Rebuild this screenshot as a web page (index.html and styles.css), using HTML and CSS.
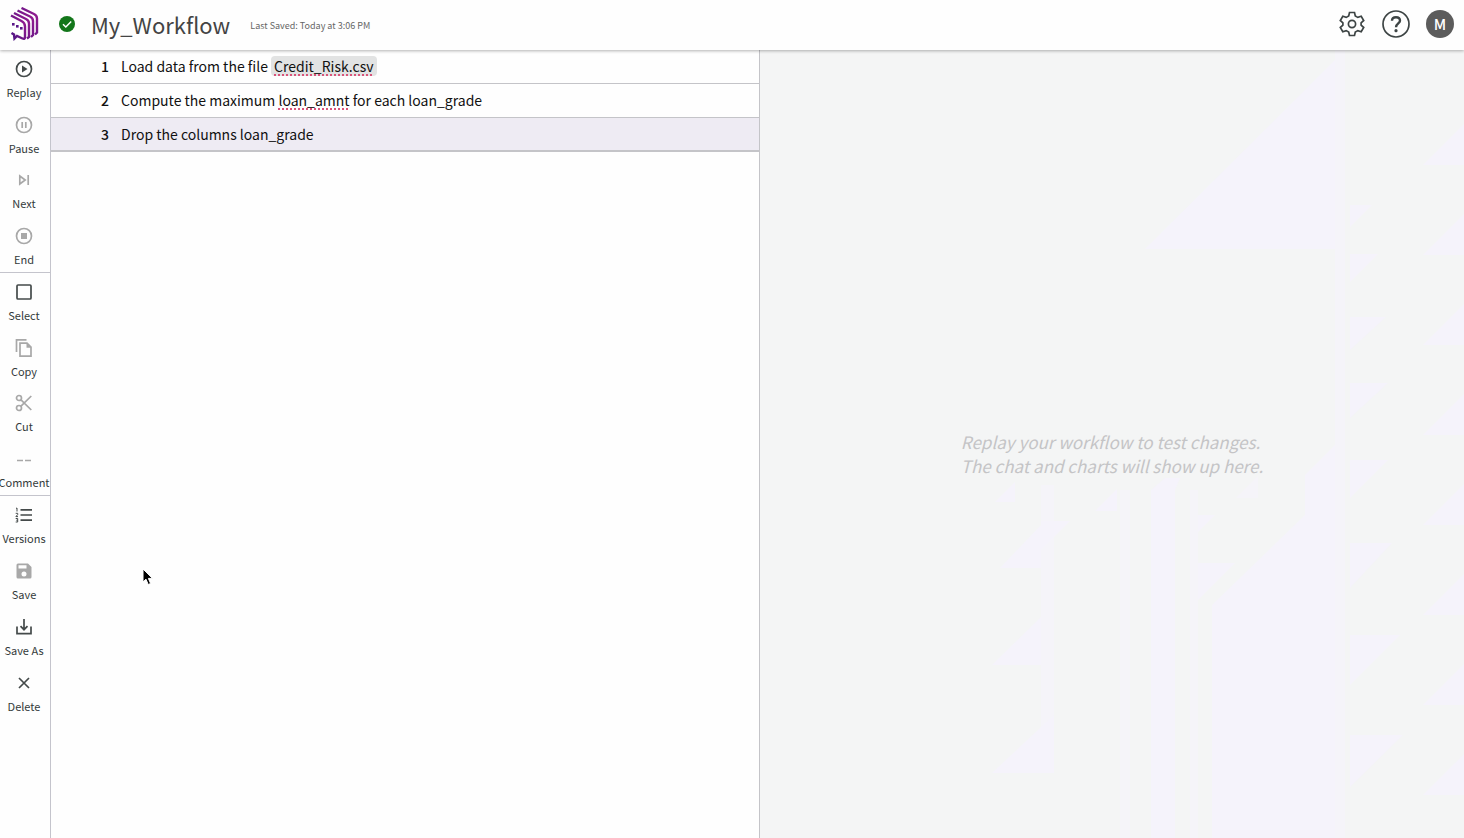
FILE: index.html
```html
<!DOCTYPE html>
<html lang="en">
<head>
<meta charset="utf-8">
<title>My_Workflow</title>
<link rel="stylesheet" href="styles.css">
</head>
<body>
<header class="topbar">
  <svg class="logo" viewBox="0 0 32 34" aria-label="Home" role="img">
    <defs><linearGradient id="brand" x1="0" y1="1" x2="1" y2="0"><stop offset="0" stop-color="#4b1583"/><stop offset="1" stop-color="#9c1c91"/></linearGradient></defs>
    <g fill="none" stroke="url(#brand)" stroke-width="2.4">
      <path d="M12.500 1L25 7Q28 8.500 28 11.500V25.500L26 27.500"/>
      <path d="M8.500 3.500L21 9.500Q24 11 24 14V28L22 30"/>
      <path d="M5 6L17 12Q20 13.500 20 16.500V30L18 31.500"/>
      <path d="M2 8.500L12.500 14Q16 15.800 16 19.500V30Q16 32.500 13.500 31.500L8 29L5.500 31.500L5 27.500L2.500 26"/>
    </g>
    <g fill="#5a1788"><rect x="3" y="16" width="2.600" height="2.600"/><rect x="7" y="18" width="2.600" height="2.600"/><rect x="11" y="20" width="2.600" height="2.600"/></g>
  </svg>
  <svg class="status" viewBox="0 0 16 16" role="img" aria-label="Saved"><circle cx="8" cy="8" r="8" fill="#13761a"/><path d="M4 8.200L6.800 11L12.200 5.400" fill="none" stroke="#fff" stroke-width="1.500"/></svg>
  <h1 class="title">My_Workflow</h1>
  <span class="saved">Last Saved: Today at 3:06 PM</span>
  <div class="account">
    <button class="round" type="button" aria-label="Settings"><svg viewBox="0 0 28 28"><path d="M11.500 2.500H16.500L17.300 6L19.800 7.400L23.200 6.300L25.700 10.500L23.100 12.800V15.200L25.700 17.500L23.200 21.700L19.800 20.600L17.300 22L16.500 25.500H11.500L10.700 22L8.200 20.600L4.800 21.700L2.300 17.500L4.900 15.200V12.800L2.300 10.500L4.800 6.300L8.200 7.400L10.700 6Z"/><circle cx="14" cy="14" r="3.600"/></svg></button>
    <button class="round" type="button" aria-label="Help"><svg viewBox="0 0 28 28"><circle cx="14" cy="14" r="13"/><path class="bold" d="M10 10.800C10 8.500 11.600 7.200 14 7.200S18 8.600 18 10.700C18 13.300 14 13.600 14 17.200"/><circle class="dot" cx="14" cy="20.700" r="1.600"/></svg></button>
    <button class="avatar" type="button" aria-label="Account">M</button>
  </div>
</header>
<main class="workspace">
  <nav class="tools" aria-label="Workflow tools">
    <div class="group">
      <button class="tool" type="button"><svg viewBox="0 0 20 20"><circle cx="10" cy="10" r="7.500"/><path class="solid" d="M8 6.500L13.500 10L8 13.500Z"/></svg>Replay</button>
      <button class="tool off" type="button"><svg viewBox="0 0 20 20"><circle cx="10" cy="10" r="7.500"/><path d="M8.200 7V13M11.800 7V13"/></svg>Pause</button>
      <button class="tool off" type="button"><svg viewBox="0 0 20 20"><path d="M5.800 6L11.200 10L5.800 14ZM14.200 5V15"/></svg>Next</button>
      <button class="tool off" type="button"><svg viewBox="0 0 20 20"><circle cx="10" cy="10" r="7.500"/><path class="solid" d="M7 7H13V13H7Z"/></svg>End</button>
    </div>
    <div class="group">
      <button class="tool" type="button"><svg viewBox="0 0 20 20"><rect x="3" y="3" width="14" height="14" rx="1"/></svg>Select</button>
      <button class="tool off" type="button"><svg viewBox="0 0 20 20"><path d="M2.500 14V1.800H12.500M6 5.200H13L17 9.200V18.200H6Z"/><path class="solid" d="M12.500 5V9.800H17.200Z"/></svg>Copy</button>
      <button class="tool off" type="button"><svg viewBox="0 0 20 20"><circle cx="5" cy="5" r="2.500"/><circle cx="5" cy="15" r="2.500"/><path d="M7 6.800L17.300 17M7 13.200L17.300 3"/></svg>Cut</button>
      <button class="tool off" type="button"><svg viewBox="0 0 20 20"><path d="M3 11.500H9M11 11.500H17"/></svg>Comment</button>
    </div>
    <div class="group">
      <button class="tool" type="button"><svg viewBox="0 0 20 20"><path d="M6.500 4.800H18M6.500 10H18M6.500 15.200H18"/><path class="thin" d="M2 3.400L3 3V6.500M1.700 8.300H3.700V9.500L1.900 11.600H4M1.700 13.500H3.700V17H1.700M2.300 15.200H3.700"/></svg>Versions</button>
      <button class="tool off" type="button"><svg viewBox="0 0 20 20"><path class="solid" fill-rule="evenodd" d="M4 2.500H14L17.500 6V16Q17.500 17.500 16 17.500H4Q2.500 17.500 2.500 16V4Q2.500 2.500 4 2.500ZM4.500 4.300V7.500H12.500V4.300ZM10 10.500A2.500 2.500 0 1 0 10 15.500A2.500 2.500 0 1 0 10 10.500Z"/></svg>Save</button>
      <button class="tool" type="button"><svg viewBox="0 0 20 20"><path d="M3 9.500V16.700H17V9.500M10 2V12.500M6.500 9.200L10 12.700L13.500 9.200"/></svg>Save As</button>
      <button class="tool" type="button"><svg viewBox="0 0 20 20"><path d="M5 5L15 15M15 5L5 15"/></svg>Delete</button>
    </div>
  </nav>
  <section class="editor" aria-label="Steps">
    <ol class="steps">
      <li class="step"><span class="num">1</span><span>Load data from the file <span class="file"><span class="spell">Credit_Risk.csv</span></span></span></li>
      <li class="step"><span class="num">2</span><span>Compute the maximum <span class="spell">loan_amnt</span> for each loan_grade</span></li>
      <li class="step current"><span class="num">3</span><span>Drop the columns loan_grade</span></li>
    </ol>
    <svg class="cursor" viewBox="0 0 12 18" aria-hidden="true"><path d="M1 1V14L4 11.200L6.200 16.500L8.600 15.500L6.400 10.400H10.500Z" fill="#000" stroke="#fff" stroke-width="1"/></svg>
  </section>
  <section class="preview" aria-label="Preview">
    <svg class="pattern" viewBox="760 50 704 788" preserveAspectRatio="xMaxYMin slice" aria-hidden="true">
      <path d="M1145 249L1335 60V249Z"/>
      <path class="faint" d="M1335 50H1345V838H1335ZM1120 490H1130V838H1120ZM1190 490H1198V838H1190ZM1041 485H1054V773H1041ZM1236 498L1258 476V498Z"/>
      <path d="M1151 490L1165 478H1180L1175 490V838H1151Z"/>
      <path d="M1212 605L1305 515V475L1335 445V838H1212Z"/>
      <path d="M1423 165L1464 124V165ZM1423 255L1464 214V255ZM1423 345L1464 304V345ZM1423 435L1464 394V435ZM1423 525L1464 484V525ZM1423 615L1464 574V615ZM1423 705L1464 664V705ZM1423 795L1464 754V795Z"/>
      <path d="M1350 205H1372L1350 227ZM1350 254H1378L1350 282ZM1350 317H1386L1350 350ZM1350 383H1388L1350 418ZM1350 460H1388L1350 498ZM1350 543H1392L1350 588ZM1350 635H1400L1350 685ZM1350 735H1403L1350 787Z"/>
      <path d="M995 502L1015 482V502ZM1000 568L1041 525V568ZM1041 521H1070L1041 550ZM992 665L1041 617V665ZM992 773L1054 715V773ZM1095 511L1117 489V511ZM1198 515H1215L1198 532ZM1198 563H1235L1198 600Z"/>
    </svg>
    <p class="hint">Replay your workflow to test changes.<br>The chat and charts will show up here.</p>
  </section>
</main>
</body>
</html>
```
FILE: styles.css
```css
* { box-sizing: border-box; }
body {
  margin: 0;
  min-height: 100vh;
  display: flex;
  flex-direction: column;
  background: #fefefe;
  color: #111;
  font-family: "Noto Sans CJK SC", "Open Sans", sans-serif;
  font-size: 14px;
}
button { border: 0; padding: 0; background: none; font: inherit; color: inherit; }
.topbar {
  position: relative;
  z-index: 1;
  display: flex;
  align-items: center;
  height: 50px;
  padding: 0 10px 2px 9px;
  background: #fefefe;
  box-shadow: 0 1px 3px rgba(0, 0, 0, 0.3);
}
.logo { width: 32px; height: 34px; }
.status { width: 16px; height: 16px; margin-left: 18px; }
.title { margin: 0 0 0 16px; font-size: 22px; line-height: 32px; font-weight: 400; color: #444; }
.saved { margin: 2px 0 0 20px; font-size: 9px; color: #666; }
.account { display: flex; align-items: center; gap: 16px; margin-left: auto; }
.round, .round svg { display: block; width: 28px; height: 28px; }
.round svg { fill: none; stroke: #3d4444; stroke-width: 1.7; }
.round .bold { stroke-width: 2.4; }
.round .dot { fill: #3d4444; stroke: none; }
.avatar { width: 28px; height: 28px; border-radius: 50%; background: #5c5c5c; color: #fff; font-size: 15px; line-height: 28px; font-weight: 500; }
.workspace { flex: 1; display: grid; grid-template-columns: 51px minmax(0, 709fr) minmax(0, 704fr); }
.tools { border-right: 1px solid #c4c4cc; }
.group {
  display: flex;
  flex-direction: column;
  justify-content: space-between;
  min-height: 223px;
  border-bottom: 1px solid #c4c4cc;
}
.group:last-child { border-bottom: 0; }
.tool {
  display: flex;
  flex-direction: column;
  align-items: center;
  gap: 5px;
  width: 48px;
  height: 55px;
  padding-top: 9px;
  font-size: 11px;
  line-height: 16px;
  color: #333a3a;
}
.tool svg { width: 20px; height: 20px; fill: none; stroke: #444a4a; stroke-width: 1.7; }
.tool .solid { fill: #444a4a; stroke: none; }
.tool .thin { stroke-width: 1; }
.off svg { stroke: #a8a8a8; }
.off .solid { fill: #a8a8a8; }
.editor { position: relative; border-right: 1px solid #c4c4c8; }
.steps { margin: 0; padding: 0; list-style: none; }
.step { display: flex; height: 34px; padding-left: 50px; line-height: 33px; border-bottom: 1px solid #c4c4c8; white-space: nowrap; }
.num { width: 20px; font-weight: 500; }
.current { background: #eeebf3; border-bottom-width: 2px; }
.file { display: inline-block; padding: 0 3px; border-radius: 4px; background: #e2e3e3; line-height: 20px; }
.spell { text-decoration: underline dotted #d9547a 2px; text-underline-offset: 2px; text-decoration-skip-ink: none; }
.cursor { position: absolute; left: 91px; top: 518px; width: 12px; height: 18px; }
.preview { position: relative; display: flex; align-items: center; justify-content: center; padding-top: 20px; background: #f4f5f5; }
.pattern { position: absolute; inset: 0; width: 100%; height: 100%; fill: #f5f3fb; }
.pattern .faint { fill: #f5f4f9; }
.hint { position: relative; margin: 0; font-size: 17px; line-height: 24px; font-style: italic; color: #c4c4c6; }
```
